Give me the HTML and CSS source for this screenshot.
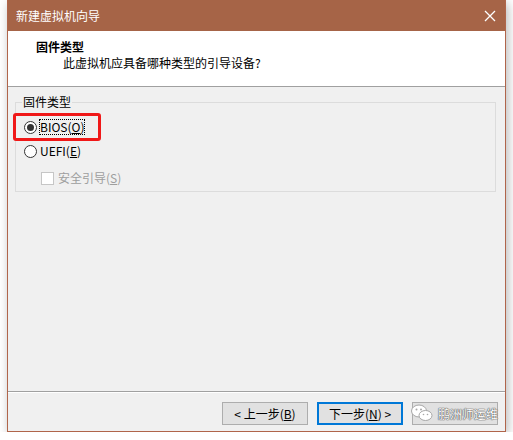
FILE: index.html
```html
<!DOCTYPE html>
<html lang="zh-CN">
<head>
  <meta charset="UTF-8">
  <title>新建虚拟机向导</title>
  <link rel="stylesheet" href="styles.css">
</head>
<body>
  <div class="window">
    <div class="titlebar">
      <span class="title">新建虚拟机向导</span>
      <svg class="close" width="12" height="12" viewBox="0 0 12 12">
        <path d="M1 1 L11 11 M11 1 L1 11" stroke="#fff" stroke-width="1.3" fill="none"/>
      </svg>
    </div>

    <div class="header">
      <div class="header-title">固件类型</div>
      <div class="header-sub">此虚拟机应具备哪种类型的引导设备?</div>
    </div>

    <div class="content">
      <fieldset class="group">
        <legend>固件类型</legend>
        <div class="row">
          <span class="radio checked"></span>
          <span class="focus">BIOS(<u>O</u>)</span>
        </div>
        <div class="row">
          <span class="radio"></span>
          <span class="label">UEFI(<u>E</u>)</span>
        </div>
        <div class="row sub disabled">
          <span class="check"></span>
          <span class="label">安全引导(<u>S</u>)</span>
        </div>
      </fieldset>
    </div>

    <div class="footer">
      <button class="btn">&lt; 上一步(<u>B</u>)</button>
      <button class="btn default">下一步(<u>N</u>) &gt;</button>
      <button class="btn"></button>
    </div>

    <!-- 红框标注 -->
    <div class="mark"></div>

    <div class="watermark">
      <svg width="22" height="18" viewBox="0 0 22 18">
        <ellipse cx="8" cy="7" rx="7.5" ry="6" fill="#fff" stroke="#a8a8a8"/>
        <ellipse cx="14.5" cy="11.5" rx="6.5" ry="5" fill="#fff" stroke="#a8a8a8"/>
        <circle cx="5.5" cy="5.5" r="1" fill="#a8a8a8"/>
        <circle cx="10" cy="5.5" r="1" fill="#a8a8a8"/>
        <circle cx="12.5" cy="10.5" r="0.8" fill="#a8a8a8"/>
        <circle cx="16.5" cy="10.5" r="0.8" fill="#a8a8a8"/>
      </svg>
      <span>鹏洲师运维</span>
    </div>
  </div>
</body>
</html>
```

FILE: styles.css
```css
body {
  margin: 0;
  background-color: #fff;
  font-family: "Noto Sans CJK SC", sans-serif;
  font-size: 12px;
  color: #000;
}

.window {
  position: relative;
  margin-left: 7px;
  width: 497px;
  border: 1px solid #b0654a;
  border-top: none;
  background-color: #f0f0f0;
  box-shadow: 2px 3px 10px rgba(0, 0, 0, 0.28);
}

.titlebar {
  height: 31px;
  background-color: #a66447;
  display: flex;
  align-items: center;
  justify-content: space-between;
  padding: 0 9px 0 8px;
}

.title {
  color: #fff;
  line-height: 16px;
  margin-top: 1px;
}

.header {
  height: 56px;
  background-color: #fff;
  border-bottom: 1px solid #a0a0a0;
  padding-left: 28px;
  box-sizing: border-box;
  padding-top: 8px;
}

.header-title {
  font-weight: bold;
  line-height: 16px;
}

.header-sub {
  line-height: 16px;
  padding-left: 27px;
}

.content {
  height: 304px;
  padding: 7px 9px 0 7px;
  box-sizing: border-box;
}

.group {
  margin: 0;
  border: 1px solid #dcdcdc;
  padding: 5px 0 0 8px;
  height: 98px;
  box-sizing: border-box;
}

.group legend {
  padding: 0 1px;
  margin-left: -2px;
  line-height: 16px;
}

.row {
  height: 24px;
  display: flex;
  align-items: center;
}

.row.sub {
  height: 20px;
  margin-top: 5px;
  padding-left: 17px;
}

.radio {
  width: 11px;
  height: 11px;
  border: 1px solid #333;
  border-radius: 50%;
  background-color: #fff;
  position: relative;
  margin-right: 2px;
}

.radio.checked::after {
  content: "";
  position: absolute;
  left: 2px;
  top: 2px;
  width: 7px;
  height: 7px;
  border-radius: 50%;
  background-color: #333;
}

.focus {
  border: 1px dotted #000;
  line-height: 14px;
}

.label {
  padding-left: 1px;
  line-height: 16px;
}

.check {
  width: 11px;
  height: 11px;
  border: 1px solid #c6c6c6;
  background-color: #fff;
  margin-right: 3px;
}

.disabled .label {
  color: #9e9e9e;
}

.footer {
  height: 40px;
  border-top: 1px solid #a0a0a0;
  box-shadow: inset 0 1px 0 #fff;
  box-sizing: border-box;
  display: flex;
  justify-content: flex-end;
  gap: 9px;
  padding: 10px 7px 0 0;
}

.btn {
  width: 86px;
  height: 23px;
  border: 1px solid #adadad;
  background-color: #e1e1e1;
  font-family: "Noto Sans CJK SC", sans-serif;
  font-size: 12px;
  line-height: 16px;
  padding: 0;
  color: #000;
}

.btn.default {
  border: 2px solid #0078d7;
}

.mark {
  position: absolute;
  left: 5px;
  top: 113px;
  width: 82px;
  height: 22px;
  border: 3px solid #f01818;
  border-radius: 3px;
}

.watermark {
  position: absolute;
  left: 403px;
  top: 404px;
  display: flex;
  align-items: center;
  gap: 5px;
  color: #fff;
  font-size: 12px;
  text-shadow: 0 0 1px #555, 0 0 1px #555, 0 0 1px #555;
}
```
